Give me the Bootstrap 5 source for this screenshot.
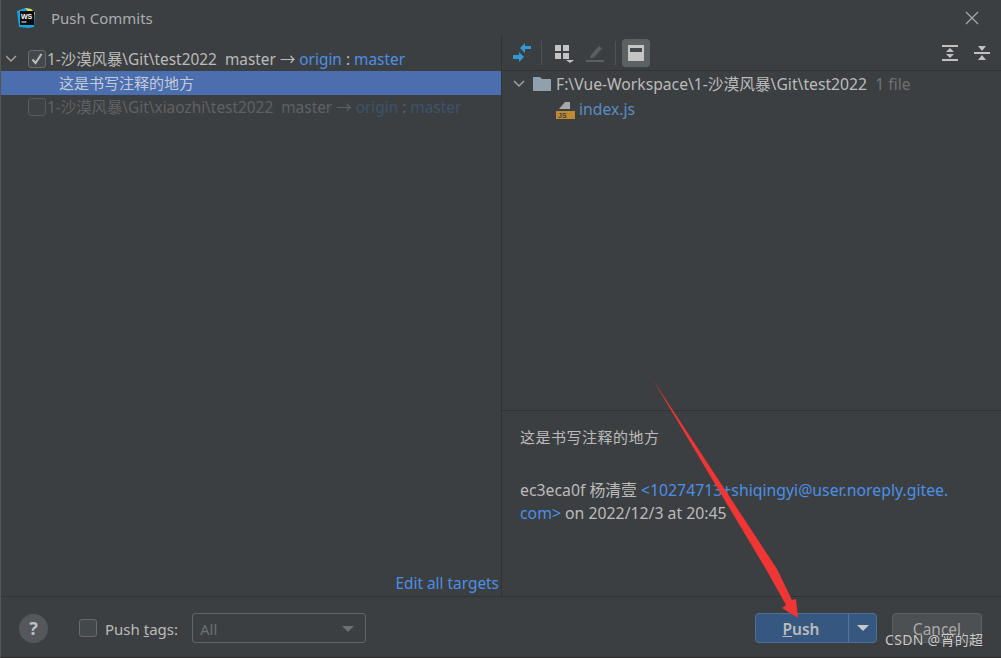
<!DOCTYPE html>
<html lang="zh">
<head>
<meta charset="utf-8">
<title>Push Commits</title>
<link href="https://cdn.jsdelivr.net/npm/bootstrap@5.3.0/dist/css/bootstrap.min.css" rel="stylesheet">
<style>
html,body{height:100%;margin:0;background:#3c3f41;overflow:hidden}
body{font-family:"Noto Sans","Noto Sans CJK SC",sans-serif;font-size:15px;color:#bbbbbb;line-height:24px}
.ide-win{position:relative;width:1001px;height:658px;background:#3c3f41;border-left:1px solid #555;border-bottom:1px solid #2b2b2b}
.ide-title{height:36px;padding-left:15px;font-size:15px;color:#a9adb1}
.ide-title .ttl{margin-left:15px}
.ide-title .closex{margin-right:22px}
.ide-main{height:560px}
.ide-left{width:501px;flex:none;border-right:1px solid #323232;padding-top:11px;font-size:15.4px}
.ide-right{width:499px;flex:none;font-size:15.7px}
.repo-row{height:24px;padding-left:5px;white-space:pre}
.repo-row .chev{width:22px;flex:none}
.repo-txt{margin-left:1px;padding-top:2px}
.ck{width:18px;height:18px;border:1.5px solid #6b6b6b;border-radius:3px;background:#43494a;flex:none;display:flex;align-items:center;justify-content:center}
.ide-link{color:#4c8fe6}
.sel-row{height:24px;background:#4b6eaf;padding-left:58px;color:#c4cbd8;font-size:15px}
.dim{color:#5f6264}
.dim .ide-link{color:#3b536f}
.dim .ck{border-color:#585a5c;background:#3f4244}
.edit-all{margin-top:auto;text-align:right;padding-right:2px;color:#4c8fe6;font-size:15.4px}
.tool{height:35px;border-bottom:1px solid #323232;padding-left:10px;padding-right:11px}
.sep{width:1px;height:24px;background:#505355;flex:none}
.sep1{margin:0 11px 0 9px}
.sep2{margin:0 6px 0 10px}
.ic-pen{margin-left:10px}
.ic-exp{margin-left:auto}
.ic-col{margin-left:15px}
.tbtn{width:28px;height:28px;border-radius:4px;background:#5c6164;display:flex;align-items:center;justify-content:center}
.tree{flex:1 1 auto}
.tree-row{height:25px;white-space:pre}
.tree-a{padding-left:11px}
.tree-b{padding-left:54px}
.lbl-a{margin-left:5px}
.lbl-b{margin-left:4px}
.muted-n{color:#6e7072}
.file-link{color:#5a8cc2}
.det{height:186px;border-top:1px solid #323232;padding:15px 18px 0;line-height:23px;font-size:15.8px}
.det-title{margin-bottom:30px;letter-spacing:.5px;font-size:15px}
.ide-foot{height:61px;border-top:1px solid #323232;padding:2px 19px 0 18px}
.help{width:29px;height:29px;border-radius:50%;background:#54585a;color:#bdbfc1;font-weight:700;font-size:18px;display:flex;align-items:center;justify-content:center}
.ck-tags{margin-left:31px}
.lbl-tags{margin-left:8px;padding-top:2px}
.combo{width:174px;height:30px;border:1.5px solid #646464;border-radius:3px;color:#6d6f71;padding:2px 7px 0;margin-left:14px}
.tri{width:0;height:0;border-left:6px solid transparent;border-right:6px solid transparent;border-top:6px solid #6d6f71}
.push{width:122px;height:30px;background:#365880;border:1.5px solid #4c7198;border-radius:4px;color:#bbbbbb;font-weight:600;padding:0;font-size:15.5px}
.push .lab{width:90px;text-align:center;margin-right:2px;border-right:0;height:100%;line-height:30px}
.push .dd{flex:1 1 auto;display:flex;align-items:center;justify-content:center;border-left:1px solid #4f769f}
.push .tri{border-top-color:#c9c9c9}
.cancel{width:90px;height:30px;margin-left:15px;background:#4c5052;border:1.5px solid #5e6060;border-radius:4px;color:#a9a9a9;text-align:center;line-height:30px;font-size:15.5px}
.mark-arrow{position:absolute;left:-1px;top:0;pointer-events:none}
.wm{position:absolute;left:884px;top:630px;font-size:14px;line-height:20px;color:#d0d0d0;text-shadow:0 0 1px #222;letter-spacing:.3px}
</style>
</head>
<body>
<div class="ide-win d-flex flex-column">
  <div class="ide-title d-flex align-items-center">
    <svg width="20" height="20" viewBox="0 0 20 20">
      <path d="M1 3 9 0l6 1 4 4-1 14-5 1-10-1z" fill="#12a5e0"/>
      <path d="M9 0l6 1 4 4-2 3z" fill="#f2e23b"/>
      <rect x="4" y="3" width="14" height="14" fill="#0b0b0b"/>
      <text x="5" y="10.5" font-size="7" font-weight="700" fill="#fff" font-family="Liberation Sans,sans-serif">WS</text>
      <rect x="5.5" y="13.5" width="5" height="1" fill="#fff"/>
    </svg>
    <span class="ttl">Push Commits</span>
    <svg class="ms-auto closex" width="14" height="14" viewBox="0 0 14 14"><path d="M1 1l12 12M13 1 1 13" stroke="#a8a8a8" stroke-width="1.2" fill="none"/></svg>
  </div>
  <div class="ide-main d-flex">
    <div class="ide-left d-flex flex-column">
      <div class="repo-row d-flex align-items-center">
        <svg class="chev" width="22" height="10" viewBox="0 0 22 10"><path d="M0 2l5 5 5-5" stroke="#a0a0a0" stroke-width="1.5" fill="none"/></svg>
        <span class="ck"><svg width="14" height="14" viewBox="0 0 14 14"><path d="M2.500 7.500l3 3.500 6-9" stroke="#bdbdbd" stroke-width="2" fill="none"/></svg></span><span class="repo-txt">1-沙漠风暴\Git\test2022  master → <span class="ide-link">origin</span> : <span class="ide-link">master</span></span>
      </div>
      <div class="sel-row">这是书写注释的地方</div>
      <div class="repo-row d-flex align-items-center dim">
        <span class="chev d-block"></span>
        <span class="ck"></span><span class="repo-txt">1-沙漠风暴\Git\xiaozhi\test2022  master → <span class="ide-link">origin</span> : <span class="ide-link">master</span></span>
      </div>
      <div class="edit-all">Edit all targets</div>
    </div>
    <div class="ide-right d-flex flex-column">
      <div class="tool d-flex align-items-center">
        <svg width="20" height="20" viewBox="0 0 20 20"><path d="M19 4h-6V1l-5 5 5 5V7h6zM1 17h6v3l5-5-5-5v3H1z" fill="#2f9ad3" transform="translate(0 -1)"/></svg>
        <span class="sep sep1"></span>
        <svg width="22" height="22" viewBox="0 0 22 22"><path d="M2 3h6v6H2zM10 3h6v6h-6zM2 11h6v6H2zM10 11h6v6h-6z" fill="#c4c4c4"/><path d="M13 18h8l-4 3z" fill="#c4c4c4"/></svg>
        <svg class="ic-pen" width="20" height="20" viewBox="0 0 20 20"><path d="M1 17h18v2H1z" fill="#5c5e60"/><path d="M6 12 14 3l3 2.500-8 9-4 1z" fill="#5c5e60"/></svg>
        <span class="sep sep2"></span>
        <span class="tbtn"><svg width="16" height="16" viewBox="0 0 16 16"><rect width="16" height="16" fill="#c4c4c4"/><rect x="2" y="3" width="12" height="4" fill="#46494b"/></svg></span>
        <svg class="ic-exp" width="18" height="18" viewBox="0 0 18 18"><path d="M1 1h16v2H1zM1 15h16v2H1zM9 4l4 4H5zM9 14l-4-4h8z" fill="#c0c0c0"/></svg>
        <svg class="ic-col" width="16" height="18" viewBox="0 0 16 18"><path d="M0 8h16v2H0zM8 7 4 2h8zM8 11l4 5H4z" fill="#c0c0c0"/></svg>
      </div>
      <div class="tree">
        <div class="tree-row d-flex align-items-center tree-a">
          <svg width="12" height="8" viewBox="0 0 12 8"><path d="M1 1l5 5 5-5" stroke="#a0a0a0" stroke-width="1.500" fill="none"/></svg>
          <svg class="ms-2" width="18" height="14" viewBox="0 0 18 14"><path d="M0 0h7l2 2h9v12H0z" fill="#90a0ac"/></svg>
          <span class="lbl-a">F:\Vue-Workspace\1-沙漠风暴\Git\test2022  <span class="muted-n">1 file</span></span>
        </div>
        <div class="tree-row d-flex align-items-center tree-b">
          <svg width="19" height="20" viewBox="0 0 19 20"><path d="M3 10 9 3h5v7z" fill="#a8a8a8"/><rect y="12" width="19" height="8" fill="#c18a30"/><text x="2" y="19" font-size="7" font-weight="700" fill="#3c3f41" font-family="Liberation Sans,sans-serif">JS</text></svg>
          <span class="file-link lbl-b">index.js</span>
        </div>
      </div>
      <div class="det">
        <div class="det-title">这是书写注释的地方</div>
        <div>ec3eca0f 杨清壹 <span class="ide-link">&lt;10274713+shiqingyi@user.noreply.gitee.<br>com&gt;</span> on 2022/12/3 at 20:45</div>
      </div>
    </div>
  </div>
  <div class="ide-foot d-flex align-items-center">
    <span class="help">?</span>
    <span class="ck ck-tags"></span>
    <span class="lbl-tags">Push <u>t</u>ags:</span>
    <div class="combo d-flex align-items-center justify-content-between"><span>All</span><span class="tri me-1"></span></div>
    <div class="push d-flex ms-auto"><span class="lab"><u>P</u>ush</span><span class="dd"><span class="tri"></span></span></div>
    <div class="cancel">Cancel</div>
  </div>
  <svg class="mark-arrow" width="1001" height="658" viewBox="0 0 1001 658"><path d="M653 380 777 569 792 600 796 599 798 618 782 608 786 605 767 571Z" fill="#f03535"/></svg>
  <div class="wm">CSDN @宵的超</div>
</div>
</body>
</html>
